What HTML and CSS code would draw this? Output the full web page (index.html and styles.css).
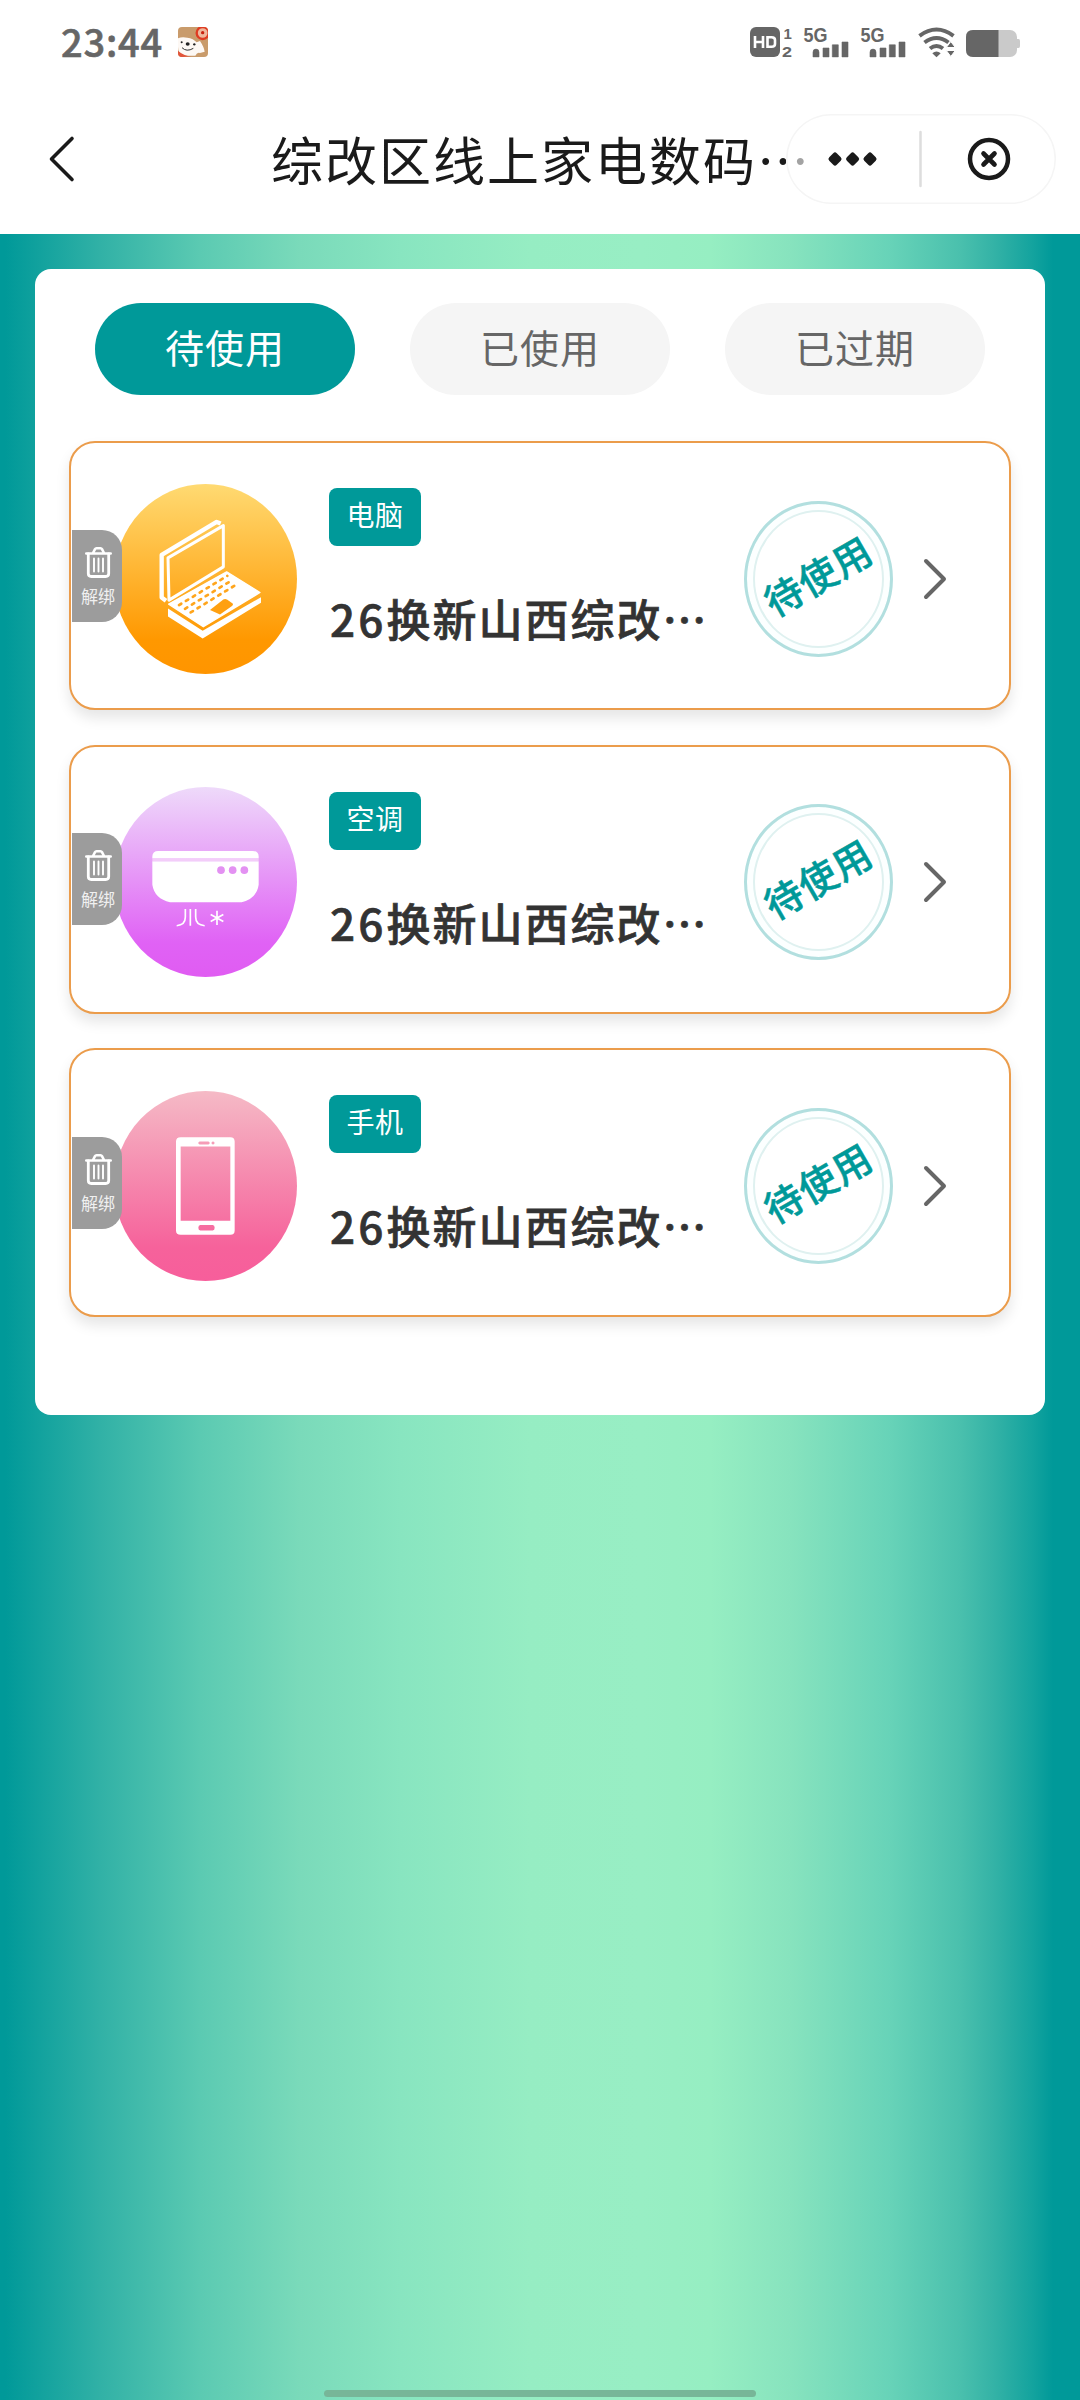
FILE: index.html
```html
<!DOCTYPE html>
<html lang="zh-CN">
<head>
<meta charset="utf-8">
<title>综改区线上家电数码</title>
<link rel="stylesheet" href="styles.css">
</head>
<body>
<svg class="defs" width="0" height="0">
  <symbol id="trash" viewBox="0 0 27 31">
    <g fill="none" stroke="#fff" stroke-linecap="round" stroke-linejoin="round">
      <path d="M1.3 6.5H25.7M8 6L10 2.2Q10.500 1.300 11.500 1.300H15.500Q16.500 1.300 17 2.200L19 6" stroke-width="2.6"/>
      <path d="M3.300 7V26.500Q3.300 29.500 6.300 29.500H20.700Q23.700 29.500 23.700 26.500V7" stroke-width="2.800"/>
      <path d="M9 11.500V24.500M13.500 11.500V24.500M18 11.500V24.500" stroke-width="1.900"/>
    </g>
  </symbol>
  <symbol id="bars" viewBox="0 0 46 32">
    <path d="M9 31.200V26.500Q9 23.300 12 23.300T15 26.500V31.200ZM19 22.200H25V31.200H19ZM28.300 19H34.300V31.200H28.300ZM38 16.200H44V31.200H38Z" fill="#666" stroke="#666" stroke-width=".6" stroke-linejoin="round"/>
  </symbol>
</svg>

<header class="status">
  <div class="status-left">
    <span class="clock">23:44</span>
    <svg class="dog" width="30" height="30" viewBox="0 0 90 90">
      <clipPath id="dogClip"><rect width="90" height="90" rx="12"/></clipPath>
      <g clip-path="url(#dogClip)">
        <rect width="90" height="90" fill="#c99b6b"/>
        <path d="M0 34Q12 28 28 32Q46 34 56 46L66 42Q78 60 80 74L66 78Q58 74 52 86H14Q0 76 0 60Z" fill="#fdf8f4"/>
        <circle cx="74" cy="18" r="18" fill="#efb79c" stroke="#df3b22" stroke-width="7"/>
        <circle cx="74" cy="17" r="5" fill="#c9210f"/>
        <path d="M0 72Q20 88 40 88L14 90H0Z" fill="#e2543a"/>
        <ellipse cx="29" cy="51" rx="6" ry="5" fill="#222"/>
        <circle cx="11" cy="46" r="3" fill="#222"/><circle cx="49" cy="52" r="3.500" fill="#222"/>
        <path d="M12 62Q26 76 46 64" fill="none" stroke="#333" stroke-width="3"/>
      </g>
    </svg>
  </div>
  <svg class="status-right" width="272" height="32" viewBox="0 0 272 32">
    <rect x="0" y="0" width="30" height="30" rx="6" fill="#666"/>
    <path d="M5 9V21M13 9V21M5 15H13M17.500 10.200V19.800H21.500Q25 19.800 25 17V13Q25 10.200 21.500 10.200Z" fill="none" stroke="#fff" stroke-width="2.600"/>
    <text x="33.500" y="11.500" font-size="15" class="net">1</text>
    <text x="32" y="29.700" font-size="15" textLength="10" lengthAdjust="spacingAndGlyphs" class="net">2</text>
    <text x="53.500" y="14.500" font-size="20" textLength="24" lengthAdjust="spacingAndGlyphs" class="net">5G</text>
    <text x="110.500" y="14.500" font-size="20" textLength="24" lengthAdjust="spacingAndGlyphs" class="net">5G</text>
    <use href="#bars" x="54" y="-1.200" width="46" height="32"/>
    <use href="#bars" x="111" y="-1.200" width="46" height="32"/>
    <g fill="none" stroke="#666" stroke-width="4">
      <path d="M169.500 8.800Q186.500-3.800 203.500 8.800"/>
      <path d="M174.500 15.500Q186.500 6.500 198.500 15.500"/>
      <path d="M180 21.500Q186.500 16.500 193 21.500" />
    </g>
    <path d="M182.300 26.200Q186.500 23 190.700 26.200L186.500 30.200Z" fill="#666"/>
    <path d="M200.800 14.500L205.300 20.500H196.300ZM200.800 29.500L196.300 23.500H205.300Z" fill="#666" stroke="#fff" stroke-width="1"/>
    <rect x="216" y="3" width="51" height="27" rx="7" fill="#cacaca"/>
    <path d="M267 12H268.500Q270 12 270 14V19Q270 21 268.500 21H267Z" fill="#cacaca"/>
    <path d="M223 3H248.500V30H223Q216 30 216 23V10Q216 3 223 3Z" fill="#666"/>
  </svg>
</header>

<nav class="nav">
  <svg class="back" width="30" height="50" viewBox="0 0 30 50"><path d="M25 4.500L4.500 25L25 45.500" fill="none" stroke="#1a1a1a" stroke-width="3.600" stroke-linecap="round" stroke-linejoin="round"/></svg>
  <h1 class="title">综改区线上家电数码…</h1>
  <div class="capsule">
    <svg width="270" height="90" viewBox="0 0 270 90">
      <g fill="#1a1a1a" stroke="#1a1a1a" stroke-width="5" stroke-linejoin="round">
        <path d="M49 41L53 45L49 49L45 45ZM66.600 41L70.600 45L66.600 49L62.600 45ZM84 41L88 45L84 49L80 45Z"/>
      </g>
      <path d="M134.500 18V72" stroke="#ddd" stroke-width="2.500" stroke-linecap="round"/>
      <circle cx="203" cy="45" r="19" fill="none" stroke="#1a1a1a" stroke-width="4.500"/>
      <path d="M197.500 39.500L208.500 50.500M208.500 39.500L197.500 50.500" stroke="#1a1a1a" stroke-width="4.600" stroke-linecap="round"/>
    </svg>
  </div>
</nav>

<main class="page">
  <section class="panel">
    <div class="tabs">
      <div class="tab active">待使用</div>
      <div class="tab">已使用</div>
      <div class="tab">已过期</div>
    </div>
    <div class="list">

      <article class="card">
        <div class="unbind"><svg width="27" height="31"><use href="#trash"/></svg><span>解绑</span></div>
        <svg class="kind" viewBox="162 581 549 571" preserveAspectRatio="none">
          <linearGradient id="gLaptop" x1="0" y1="0" x2="0" y2="1"><stop offset="0" stop-color="#ffda72"/><stop offset=".82" stop-color="#ff9800"/><stop offset="1" stop-color="#ff9500"/></linearGradient>
          <ellipse cx="436.500" cy="866.500" rx="274.500" ry="285.500" fill="url(#gLaptop)"/>
          <path d="M482 700L470 695L305 794V922L318 932" fill="none" stroke="#fff" stroke-width="13" stroke-linejoin="round"/>
          <path d="M324 803L490 706V830L327 930Z" fill="none" stroke="#fff" stroke-width="9" stroke-linejoin="round"/>
          <path d="M326 942L500 845L600 907L430 1010Z" fill="#fff" stroke="#fff" stroke-width="4" stroke-linejoin="round"/>
          <path d="M324 955L428 1022L603 921V938L428 1045L324 979Z" fill="#fff"/>
          <g stroke="#ffa51c" stroke-width="8" stroke-linecap="round" fill="none">
            <path d="M357 945L502 857" stroke-dasharray="8 16.200"/>
            <path d="M375 956L518 869" stroke-dasharray="8 16.200"/>
            <path d="M392 967L536 879" stroke-dasharray="8 16.200"/>
          </g>
          <path d="M450 960L490 928Q496 925 502 929L518 940Q521 944 516 948L480 973Z" fill="#ffa010"/>
        </svg>
        <div class="info"><span class="tag">电脑</span><h2 class="name"><span class="num">26</span>换新山西综改…</h2></div>
        <div class="stamp"><span>待使用</span></div>
        <svg class="arrow" width="26" height="46" viewBox="0 0 26 46"><path d="M4 5L22 23L4 41" fill="none" stroke="#666" stroke-width="4" stroke-linecap="round" stroke-linejoin="round"/></svg>
      </article>

      <article class="card">
        <div class="unbind"><svg width="27" height="31"><use href="#trash"/></svg><span>解绑</span></div>
        <svg class="kind" viewBox="162 141 549 571" preserveAspectRatio="none">
          <linearGradient id="gAir" x1="0" y1="0" x2="0" y2="1"><stop offset="0" stop-color="#eedafa"/><stop offset=".82" stop-color="#e062f5"/><stop offset="1" stop-color="#e05cf2"/></linearGradient>
          <ellipse cx="436.500" cy="426.500" rx="274.500" ry="285.500" fill="url(#gAir)"/>
          <path d="M277 356V350Q277 333 295 333H578Q596 333 596 350V356ZM277 364H596V435Q590 476 545 487H330Q284 478 277 435Z" fill="#fff"/>
          <path d="M277 360H596" stroke="#f3cdf9" stroke-width="8"/>
          <g fill="#e391f2"><circle cx="483" cy="391" r="11.500"/><circle cx="518" cy="391" r="11.500"/><circle cx="553" cy="391" r="11.500"/></g>
          <g fill="none" stroke="#fff" stroke-width="5">
            <path d="M376 508V532Q376 556 350 558M391 508V558M407 508V532Q407 556 434 558"/>
            <path d="M471 513V556M452 524L490 545M490 524L452 545"/>
          </g>
        </svg>
        <div class="info"><span class="tag">空调</span><h2 class="name"><span class="num">26</span>换新山西综改…</h2></div>
        <div class="stamp"><span>待使用</span></div>
        <svg class="arrow" width="26" height="46" viewBox="0 0 26 46"><path d="M4 5L22 23L4 41" fill="none" stroke="#666" stroke-width="4" stroke-linecap="round" stroke-linejoin="round"/></svg>
      </article>

      <article class="card">
        <div class="unbind"><svg width="27" height="31"><use href="#trash"/></svg><span>解绑</span></div>
        <svg class="kind" viewBox="162 152 549 571" preserveAspectRatio="none">
          <linearGradient id="gPhone" x1="0" y1="0" x2="0" y2="1"><stop offset="0" stop-color="#f5bac6"/><stop offset=".82" stop-color="#f6629b"/><stop offset="1" stop-color="#f75e9b"/></linearGradient>
          <ellipse cx="436.500" cy="437.500" rx="274.500" ry="285.500" fill="url(#gPhone)"/>
          <path fill="#fff" fill-rule="evenodd" d="M362 291H511Q524 291 524 304V571Q524 584 511 584H362Q348 584 348 571V304Q348 291 362 291ZM362 319V542H511V319ZM419 304Q415 304 415 308.500T419 313H445Q449 313 449 308.500T445 304ZM459 304A4.500 4.500 0 1 0 459.100 304ZM421 555Q415 555 415 563T421 571H458Q464 571 464 563T458 555Z"/>
        </svg>
        <div class="info"><span class="tag">手机</span><h2 class="name"><span class="num">26</span>换新山西综改…</h2></div>
        <div class="stamp"><span>待使用</span></div>
        <svg class="arrow" width="26" height="46" viewBox="0 0 26 46"><path d="M4 5L22 23L4 41" fill="none" stroke="#666" stroke-width="4" stroke-linecap="round" stroke-linejoin="round"/></svg>
      </article>

    </div>
  </section>
  <div class="home-bar"></div>
</main>
</body>
</html>
```
FILE: styles.css
```css
* { box-sizing: border-box; }
body {
  margin: 0;
  width: 1080px;
  height: 2400px;
  overflow: hidden;
  display: flex;
  flex-direction: column;
  background: #fff;
  font-family: "Noto Sans CJK SC", "Noto Sans", sans-serif;
}
.defs { position: absolute; }
svg { display: block; flex: none; }
h1, h2 { margin: 0; }

.status {
  height: 90px;
  padding: 27px 58px 0 61px;
  display: flex;
  justify-content: space-between;
  align-items: flex-start;
}
.status-left { display: flex; gap: 17px; }
.status-right { overflow: visible; }
.clock {
  width: 100px;
  font-size: 38px;
  line-height: 27px;
  font-weight: 500;
  letter-spacing: .8px;
  color: #666;
  -webkit-text-stroke: .6px #666;
  white-space: nowrap;
}
.net { fill: #666; font-weight: 700; font-family: "Liberation Sans", sans-serif; }

.nav {
  height: 144px;
  display: flex;
  align-items: center;
  padding: 0 24px 0 47px;
  position: relative;
}
.back { margin-top: -6px; }
.title {
  margin: -6px 0 0 194px;
  font-size: 52px;
  font-weight: 400;
  line-height: 80px;
  letter-spacing: 2px;
  color: #1a1a1a;
  white-space: nowrap;
}
.capsule {
  position: absolute;
  left: 786px;
  top: 24px;
  width: 270px;
  height: 90px;
  border-radius: 45px;
  background: rgba(255, 255, 255, .6);
  box-shadow: inset 0 0 0 1.5px #f5f5f5;
}

.page {
  flex: 1;
  padding: 35px 35px 3px;
  display: flex;
  flex-direction: column;
  justify-content: space-between;
  align-items: center;
  background: linear-gradient(90deg,
    #009999 0, #009999 5px, #31b1a6 100px, #5bcab2 200px, #7adaba 300px, #88e5c0 400px,
    #96edc3 530px, #98eec4 640px, #96eec2 710px, #87e3be 790px, #67d3b8 890px,
    #4ac0ad 960px, #33b2a6 995px, #13a39e 1033px, #009999 1053px);
}
.panel {
  width: 1010px;
  height: 1146px;
  padding: 34px 34px 0;
  border-radius: 16px;
  background: #fff;
}
.tabs { display: flex; justify-content: space-between; padding: 0 26px; }
.tab {
  width: 260px;
  height: 92px;
  border-radius: 46px;
  background: #f5f5f5;
  color: #666;
  font-size: 39px;
  letter-spacing: 1px;
  line-height: 87px;
  text-align: center;
}
.tab.active { background: #009999; color: #fff; }

.list { margin-top: 46px; display: flex; flex-direction: column; gap: 34.5px; }
.card {
  height: 269px;
  border: 2px solid #eb9c4b;
  border-radius: 26px;
  background: #fff;
  box-shadow: 0 8px 14px rgba(0, 0, 0, .1);
  display: flex;
  align-items: center;
  padding-left: 1px;
}
.unbind {
  width: 50px;
  height: 92px;
  margin-right: -8px;
  padding: 17px 0 0 2px;
  border-radius: 0 20px 20px 0;
  background: #9c9c9c;
  display: flex;
  flex-direction: column;
  align-items: center;
  color: #f0f0f0;
  font-size: 17px;
  line-height: 36px;
  z-index: 1;
}
.kind { width: 183px; height: 190px; margin-top: 6px; }
.info {
  width: 392px;
  margin-left: 32px;
  align-self: stretch;
  padding-top: 45px;
  display: flex;
  flex-direction: column;
  align-items: flex-start;
}
.tag {
  width: 92px;
  height: 58px;
  border-radius: 8px;
  background: #009999;
  color: #fff;
  font-size: 28px;
  letter-spacing: .5px;
  line-height: 53px;
  text-align: center;
}
.name {
  margin-top: 40px;
  font-size: 44px;
  line-height: 64px;
  letter-spacing: 2px;
  font-weight: 500;
  color: #333;
  -webkit-text-stroke: .7px #333;
  white-space: nowrap;
}
.num { letter-spacing: 3.2px; margin-left: 1px; }
.stamp {
  width: 149px;
  height: 156px;
  margin: 6px 0 0 23px;
  border: 3px solid #b2dfdf;
  border-radius: 50%;
  display: flex;
  align-items: center;
  justify-content: center;
  box-shadow: inset 0 0 0 6px #fcffff, inset 0 0 0 8px #dff1f0;
}
.stamp span {
  font-size: 38px;
  line-height: 44px;
  letter-spacing: 1px;
  font-weight: 500;
  color: #009999;
  -webkit-text-stroke: .5px #009999;
  white-space: nowrap;
  transform: translate(-1px, -4px) rotate(-30deg);
}
.arrow { margin: 6px 0 0 29px; }

.home-bar { width: 432px; height: 7px; border-radius: 4px; background: #77b698; }
```
